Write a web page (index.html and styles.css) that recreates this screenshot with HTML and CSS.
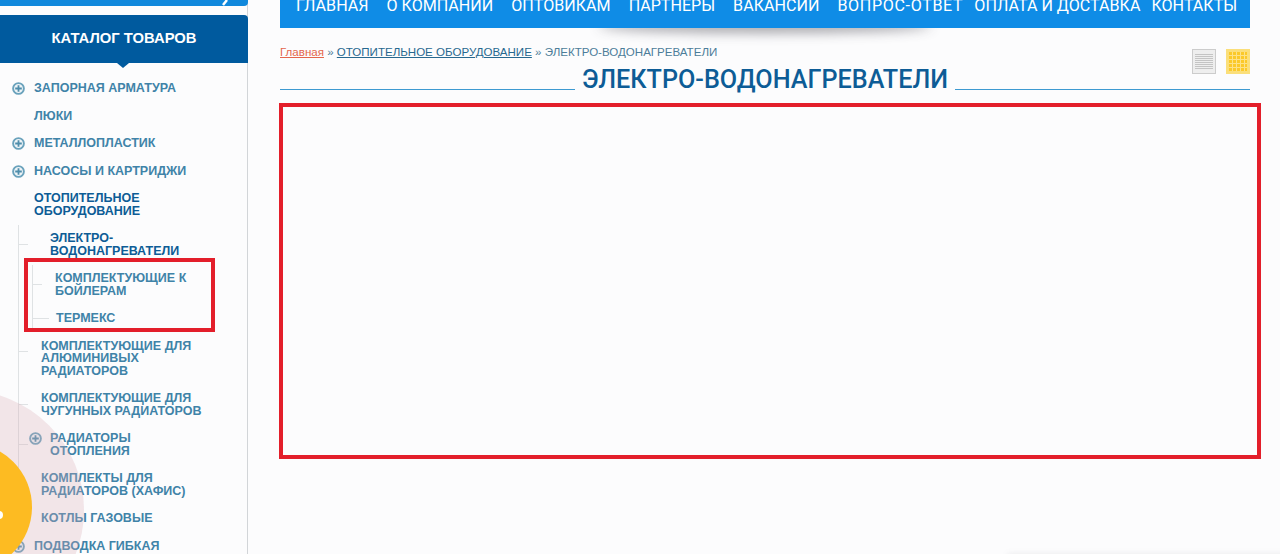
FILE: index.html
```html
<!DOCTYPE html>
<html>
<head>
    <title>Электро-водонагреватели</title>
    <link rel="stylesheet" href="styles.css">
</head>
<body>
    <svg class="defs" width="0" height="0">
        <symbol id="plus" viewBox="0 0 13 13">
            <circle cx="6.5" cy="6.5" r="5.4" fill="#eef4f7" stroke="#6aa2bc" stroke-width="1.9"/>
            <path d="M6.5 3.2v6.6M3.2 6.5h6.6" stroke="#4f8dab" stroke-width="1.8"/>
        </symbol>
    </svg>
    <div class="page">
        <aside class="sidebar">
            <div class="search-bar">
                <svg class="search-icon" width="14" height="8" viewBox="0 0 14 8"><path d="M2 6l4-5" stroke="#fff" stroke-width="2.5"/></svg>
            </div>
            <h3 class="catalog-title">КАТАЛОГ ТОВАРОВ</h3>
            <ul class="menu">
                <li><a class="row"><svg class="plus"><use href="#plus"/></svg><span>ЗАПОРНАЯ АРМАТУРА</span></a></li>
                <li><a class="row"><i class="no-icon"></i><span>ЛЮКИ</span></a></li>
                <li><a class="row"><svg class="plus"><use href="#plus"/></svg><span>МЕТАЛЛОПЛАСТИК</span></a></li>
                <li><a class="row"><svg class="plus"><use href="#plus"/></svg><span>НАСОСЫ И КАРТРИДЖИ</span></a></li>
                <li>
                    <a class="row active"><i class="no-icon"></i><span>ОТОПИТЕЛЬНОЕ<br>ОБОРУДОВАНИЕ</span></a>
                    <ul class="sub">
                        <li>
                            <a class="row active wide"><span>ЭЛЕКТРО-<br>ВОДОНАГРЕВАТЕЛИ</span></a>
                            <ul class="sub sub-third">
                                <li><a class="row"><span>КОМПЛЕКТУЮЩИЕ К<br>БОЙЛЕРАМ</span></a></li>
                                <li><a class="row"><span>ТЕРМЕКС</span></a></li>
                            </ul>
                        </li>
                        <li><a class="row"><span>КОМПЛЕКТУЮЩИЕ ДЛЯ<br>АЛЮМИНИВЫХ<br>РАДИАТОРОВ</span></a></li>
                        <li><a class="row"><span>КОМПЛЕКТУЮЩИЕ ДЛЯ<br>ЧУГУННЫХ РАДИАТОРОВ</span></a></li>
                        <li><a class="row with-plus"><svg class="plus"><use href="#plus"/></svg><span>РАДИАТОРЫ<br>ОТОПЛЕНИЯ</span></a></li>
                        <li><a class="row"><span>КОМПЛЕКТЫ ДЛЯ<br>РАДИАТОРОВ (ХАФИС)</span></a></li>
                        <li><a class="row"><span>КОТЛЫ ГАЗОВЫЕ</span></a></li>
                    </ul>
                </li>
                <li><a class="row"><svg class="plus"><use href="#plus"/></svg><span>ПОДВОДКА ГИБКАЯ</span></a></li>
            </ul>
        </aside>

        <main class="content">
            <nav class="top-nav">
                <a>ГЛАВНАЯ</a>
                <a>О КОМПАНИИ</a>
                <a>ОПТОВИКАМ</a>
                <a>ПАРТНЕРЫ</a>
                <a>ВАКАНСИИ</a>
                <a class="spaced">ВОПРОС-ОТВЕТ</a>
                <a class="tight">ОПЛАТА И ДОСТАВКА</a>
                <a class="tight">КОНТАКТЫ</a>
            </nav>
            <div class="crumbs-line">
                <div class="crumbs"><a class="home">Главная</a> » <a>ОТОПИТЕЛЬНОЕ ОБОРУДОВАНИЕ</a> » ЭЛЕКТРО-ВОДОНАГРЕВАТЕЛИ</div>
                <div class="view-icons">
                    <svg width="24" height="25" viewBox="0 0 24 25">
                        <rect x="0.5" y="0.5" width="23" height="24" fill="#eee" stroke="#ccc"/>
                        <path d="M3 5.5h18M3 7.5h18M3 9.5h18M3 11.5h18M3 13.5h18M3 15.5h18M3 17.5h18M3 19.5h18" stroke="#c4c4c4"/>
                    </svg>
                    <svg width="24" height="25" viewBox="0 0 24 25">
                        <rect width="24" height="25" fill="#fbdf7a"/>
                        <path d="M3 3h18v19H3z" fill="#fbc92a"/>
                        <path d="M6.5 3v19M10.5 3v19M14.5 3v19M18.5 3v19M3 6.5h18M3 10.5h18M3 14.5h18M3 18.5h18" stroke="#fde289"/>
                    </svg>
                </div>
            </div>
            <h1 class="page-title"><span>ЭЛЕКТРО-ВОДОНАГРЕВАТЕЛИ</span></h1>
        </main>
    </div>

    <!-- red marks drawn over the screenshot -->
    <div class="mark mark-menu"></div>
    <div class="mark mark-content"></div>

    <!-- callback button in the corner -->
    <div class="call-halo"></div>
    <div class="call-btn"><i></i></div>
    <div class="bottom-shade"></div>
</body>
</html>
```

FILE: styles.css
```css
html, body {
    margin: 0;
    height: 554px;
    overflow: hidden;
}
body {
    position: relative;
    background-color: #fcfcfd;
    font-family: "Liberation Sans", Arial, sans-serif;
    color: #3f83a8;
}
ul {
    list-style: none;
    margin: 0;
    padding: 0;
}
.defs {
    display: block;
    height: 0;
}
.page {
    display: flex;
    height: 554px;
}

/* left column */
.sidebar {
    width: 247px;
    flex-shrink: 0;
    border-right: 1px solid #d2d5d8;
}
.search-bar {
    height: 6px;
    margin-right: -1px;
    background-color: #1088dc;
    border-radius: 0 0 4px 0;
    position: relative;
    overflow: hidden;
}
.search-icon {
    position: absolute;
    right: 13px;
    top: -1px;
}
.catalog-title {
    position: relative;
    height: 48px;
    margin: 9px -1px 0 0;
    background-color: #005a9e;
    border-radius: 0 4px 0 0;
    color: #fff;
    font-size: 14.8px;
    line-height: 46px;
    text-align: center;
    font-weight: bold;
}
.catalog-title::after {
    content: "";
    position: absolute;
    left: 117px;
    bottom: -5px;
    border-top: 5px solid #005a9e;
    border-left: 6px solid transparent;
    border-right: 6px solid transparent;
}
.menu {
    padding-top: 11.6px;
    font-size: 12.5px;
    font-weight: bold;
    line-height: 12.5px;
}
.row {
    display: flex;
    align-items: flex-start;
    padding: 7.5px 0 7.5px 12px;
    gap: 9px;
}
.row.active {
    color: #0d5c96;
}
.plus {
    width: 13px;
    height: 13px;
    margin-bottom: -1px;
    flex-shrink: 0;
}
.no-icon {
    width: 13px;
    flex-shrink: 0;
}

.sub {
    position: relative;
    margin-left: 18px;
    border-left: 1px solid #dfe2e4;
}
.sub > li {
    position: relative;
}
.sub > li::before {
    content: "";
    position: absolute;
    left: 0;
    top: 19px;
    width: 9px;
    border-top: 1px solid #dfe2e4;
}
.sub .row {
    padding-left: 22px;
}
.sub .row.wide {
    padding-left: 31px;
}
.sub .row.with-plus {
    padding-left: 10px;
    gap: 8px;
}
.sub-third {
    margin-left: 13px;
}
.sub-third .row {
    padding-left: 22px;
}
.sub-third > li:last-child::before {
    top: 13px;
    width: 16px;
}
.sub-third > li:last-child .row {
    padding-left: 23px;
}

/* right column */
.content {
    width: 970px;
    margin-left: 32px;
}
.top-nav {
    position: relative;
    display: flex;
    gap: 18px;
    height: 28px;
    padding-left: 16px;
    background-color: #0f8ce6;
    color: #fff;
    font-family: Roboto, sans-serif;
    font-size: 16.1px;
    line-height: 12px;
    white-space: nowrap;
}
.top-nav .spaced {
    letter-spacing: 0.65px;
}
.top-nav .tight {
    margin-left: -7px;
}
.top-nav::after {
    content: "";
    position: absolute;
    z-index: -1;
    left: 320px;
    right: 320px;
    top: 18px;
    height: 10px;
    border-radius: 50%;
    box-shadow: 0 3px 12px 2px rgba(60, 60, 70, 0.45);
}
.crumbs-line {
    display: flex;
    justify-content: space-between;
    align-items: flex-start;
    height: 46px;
    margin-top: 21px;
    margin-bottom: -28px;
}
.crumbs {
    margin-top: -3px;
    font-size: 11.55px;
    line-height: 13px;
    color: #4c7d99;
}
.crumbs a {
    color: #27688f;
    text-decoration: underline;
}
.crumbs a.home {
    color: #e4664c;
}
.view-icons {
    display: flex;
    gap: 10px;
}
.view-icons svg {
    display: block;
}
.page-title {
    display: flex;
    align-items: flex-end;
    gap: 7px;
    margin: 0;
    color: #0d5c96;
    font-family: Roboto, sans-serif;
    font-size: 25.2px;
    font-weight: 500;
    line-height: 25px;
    white-space: nowrap;
}
.page-title::before,
.page-title::after {
    content: "";
    flex: 1;
    border-bottom: 1px solid #3d9ad1;
    margin-bottom: 2px;
}

/* overlays */
.mark {
    position: absolute;
    border: 4px solid #e31e2a;
    box-sizing: border-box;
}
.mark-menu {
    left: 24px;
    top: 258px;
    width: 191px;
    height: 74px;
}
.mark-content {
    left: 279px;
    top: 103px;
    width: 982px;
    height: 356px;
}
.call-halo {
    position: absolute;
    left: -156px;
    top: 390px;
    width: 240px;
    height: 240px;
    border-radius: 50%;
    background-color: rgba(214, 170, 178, 0.28);
}
.call-btn {
    position: absolute;
    left: -96px;
    top: 443px;
    width: 128px;
    height: 128px;
    border-radius: 50%;
    background-color: #fdbb22;
}
.call-btn i {
    position: absolute;
    left: 92px;
    top: 68px;
    width: 7px;
    height: 8px;
    background-color: #fff;
    border-radius: 0 4px 4px 0;
}
.bottom-shade {
    position: absolute;
    left: 1010px;
    right: -20px;
    top: 556px;
    height: 10px;
    box-shadow: 0 0 6px 2px rgba(120, 120, 130, 0.14);
}
```
